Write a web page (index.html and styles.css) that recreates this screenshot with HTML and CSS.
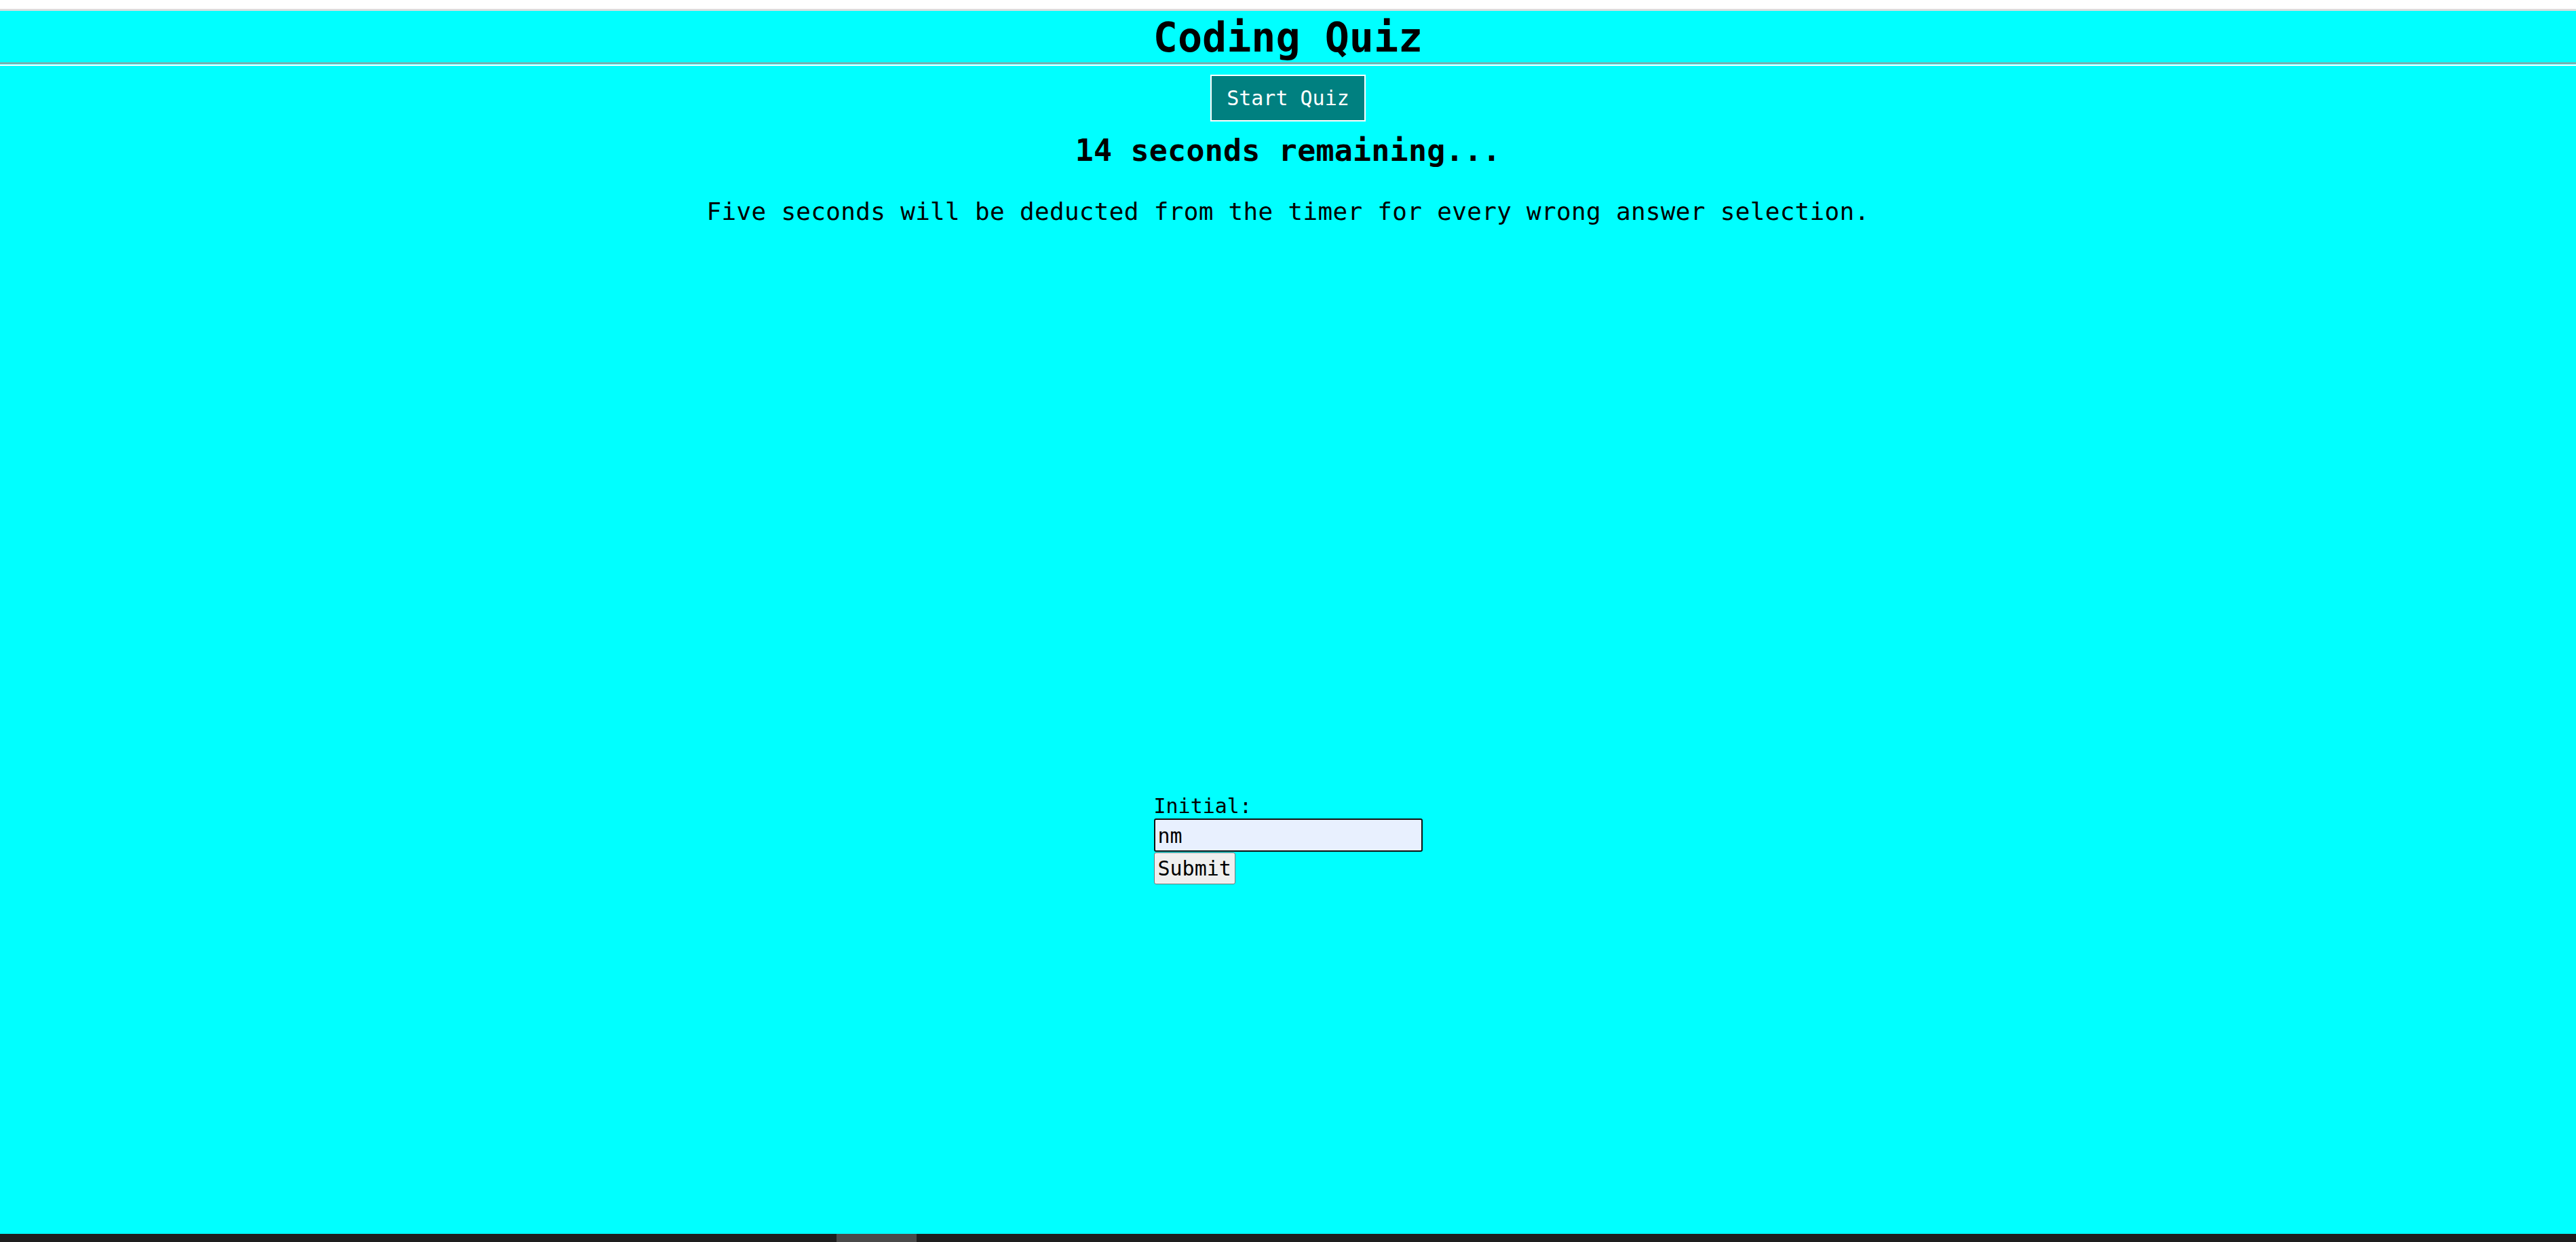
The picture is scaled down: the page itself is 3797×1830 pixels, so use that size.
FILE: index.html
```html
<!DOCTYPE html>
<html lang="en">
<head>
<meta charset="utf-8">
<title>Coding Quiz</title>
<link rel="stylesheet" href="styles.css">
</head>
<body>
<div class="topbar"></div>
<header class="header">
  <h1 class="title">Coding Quiz</h1>
</header>
<hr class="rule">
<main class="main">
  <button class="start-btn" type="button">Start Quiz</button>
  <h2 class="timer">14 seconds remaining...</h2>
  <p class="note">Five seconds will be deducted from the timer for every wrong answer selection.</p>
  <form class="entry">
    <label class="entry-label" for="initial">Initial:</label>
    <input class="entry-input" id="initial" type="text" value="nm">
    <button class="entry-submit" type="button">Submit</button>
  </form>
</main>
<div class="scrollbar"><div class="scrollbar-thumb"></div></div>
</body>
</html>
```
FILE: styles.css
```css
html, body {
  margin: 0;
  padding: 0;
}
body {
  background: #00ffff;
  color: #000;
  font-family: "DejaVu Sans Mono", "Liberation Mono", monospace;
  height: 1830px;
  display: flex;
  flex-direction: column;
  overflow: hidden;
}
.topbar {
  height: 13px;
  background: #ffffff;
  border-bottom: 3px solid #dcdcdc;
  flex: none;
}
.header {
  padding: 4px 0 2px;
  flex: none;
}
.title {
  margin: 0;
  font-size: 60px;
  line-height: 70px;
  font-weight: 700;
  text-align: center;
}
.rule {
  margin: 0;
  border: 0;
  border-top: 2px solid #9a9a9a;
  border-bottom: 2px solid #ffffff;
  height: 1px;
  flex: none;
}
.main {
  flex: 1;
  display: flex;
  flex-direction: column;
  align-items: center;
}
.start-btn {
  margin-top: 13px;
  background: #008080;
  color: #ffffff;
  border: 2px solid #ffffff;
  border-radius: 0;
  font-family: inherit;
  font-size: 30px;
  line-height: 35px;
  padding: 15px 22px;
}
.timer {
  margin: 17px 0 0;
  font-size: 45px;
  line-height: 52px;
  font-weight: 700;
  letter-spacing: 0.2px;
}
.note {
  margin: 43px 0 0;
  font-size: 36px;
  line-height: 42px;
  letter-spacing: 0.3px;
}
.entry {
  margin-top: 837px;
  width: 396px;
  display: flex;
  flex-direction: column;
  align-items: flex-start;
}
.entry-label {
  display: block;
  font-size: 30px;
  line-height: 35px;
}
.entry-input {
  box-sizing: border-box;
  margin: 1px 0 0;
  width: 396px;
  height: 49px;
  border: 2px solid #101010;
  border-radius: 3px;
  background: #e8f0fe;
  color: #000;
  font-family: inherit;
  font-size: 30px;
  padding: 2px 4px 0;
}
.entry-submit {
  box-sizing: border-box;
  margin: 1px 0 0;
  width: 120px;
  height: 47px;
  background: #efefef;
  border: 1px solid #767676;
  border-radius: 3px;
  color: #000;
  font-family: inherit;
  font-size: 30px;
  line-height: 35px;
  padding: 0 5px;
}
.scrollbar {
  flex: none;
  height: 12px;
  background: #1e1e1e;
  display: flex;
}
.scrollbar-thumb {
  margin-left: 1233px;
  width: 118px;
  height: 12px;
  background: #4a4a4a;
}
```
